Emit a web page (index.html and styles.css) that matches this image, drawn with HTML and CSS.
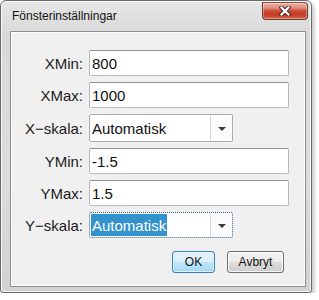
FILE: index.html
```html
<!DOCTYPE html>
<html lang="sv">
<head>
<meta charset="utf-8">
<title>Fönsterinställningar</title>
<link rel="stylesheet" href="styles.css">
</head>
<body>
<div class="window">
  <div class="titlebar">
    <span class="title">Fönsterinställningar</span>
    <div class="close">
      <svg width="12" height="10" viewBox="0 0 12 10">
        <path d="M2.5 1.5 L9.5 8.5 M9.5 1.5 L2.5 8.5" stroke="#4b2620" stroke-width="4.2" stroke-linecap="square" fill="none"/>
        <path d="M2.5 1.5 L9.5 8.5 M9.5 1.5 L2.5 8.5" stroke="#ffffff" stroke-width="2.2" stroke-linecap="square" fill="none"/>
      </svg>
    </div>
  </div>
  <div class="client">
    <div class="form">
      <label class="lbl">XMin:</label>
      <input class="field" type="text" value="800">
      <label class="lbl">XMax:</label>
      <input class="field" type="text" value="1000">
      <label class="lbl tall">X−skala:</label>
      <div class="combo tall">
        <div class="combo-text"><span>Automatisk</span></div>
        <div class="combo-btn"><span class="arrow"></span></div>
      </div>
      <label class="lbl">YMin:</label>
      <input class="field" type="text" value="-1.5">
      <label class="lbl">YMax:</label>
      <input class="field" type="text" value="1.5">
      <label class="lbl">Y−skala:</label>
      <div class="combo focused">
        <div class="combo-text"><span class="sel">Automatisk</span></div>
        <div class="combo-btn"><span class="arrow"></span></div>
      </div>
    </div>
    <div class="buttons">
      <button class="btn default">OK</button>
      <button class="btn">Avbryt</button>
    </div>
  </div>
</div>
</body>
</html>
```
FILE: styles.css
```css
html, body {
  margin: 0;
  padding: 0;
  background: #ffffff;
}

body {
  font-family: "Liberation Sans", Arial, sans-serif;
}

.window {
  width: 312px;
  height: 293px;
  box-sizing: border-box;
  border: 1px solid #6a6a6a;
  border-radius: 6px 6px 3px 3px;
  background: linear-gradient(180deg, #e6e6e6 0%, #d9d9d9 12%, #dcdcdc 60%, #d2d2d2 100%);
  box-shadow: inset 0 0 0 1px rgba(255,255,255,0.75), 2px 3px 4px rgba(0,0,0,0.25);
  padding: 0 5px 5px 9px;
  display: flex;
  flex-direction: column;
}

.titlebar {
  height: 30px;
  display: flex;
  align-items: flex-start;
  flex-shrink: 0;
}

.title {
  font-size: 12px;
  line-height: 16px;
  padding-top: 7px;
  margin-left: 2px;
  color: #111;
}

.close {
  margin-left: auto;
  margin-right: -2px;
  margin-top: 1px;
  width: 46px;
  height: 18px;
  box-sizing: border-box;
  border: 1px solid #6b3a31;
  border-top-color: #8a4a3e;
  border-radius: 0 4px 4px 4px;
  background: linear-gradient(180deg, #eeb3a6 0%, #de8f7d 30%, #cc4a35 50%, #c23a25 75%, #d26a4f 100%);
  box-shadow: inset 0 0 0 1px rgba(255,255,255,0.35);
  display: flex;
  align-items: center;
  justify-content: center;
}

.client {
  flex: 1;
  background: #f0f0f0;
  border: 1px solid #8e8e8e;
  box-shadow: inset 1px 1px 0 #ffffff, inset -1px -1px 0 #ffffff;
  box-sizing: border-box;
  display: flex;
  flex-direction: column;
  margin-top: 0;
}

.form {
  display: grid;
  grid-template-columns: 72px 200px;
  grid-template-rows: 26px 26px 28px 26px 26px 26px;
  column-gap: 6px;
  row-gap: 6px;
  padding-top: 18px;
  align-items: center;
}

.lbl {
  font-size: 15px;
  color: #1a1a1a;
  text-align: right;
  white-space: nowrap;
}

.field {
  -webkit-appearance: none;
  appearance: none;
  margin: 0;
  height: 26px;
  width: 200px;
  box-sizing: border-box;
  border: 1px solid #b5b8bd;
  border-top-color: #8e9196;
  border-radius: 2px;
  background: #ffffff;
  font-family: "Liberation Sans", Arial, sans-serif;
  font-size: 15px;
  color: #111;
  padding: 0 0 0 2px;
  outline: none;
}

.combo {
  width: 144px;
  height: 26px;
  box-sizing: border-box;
  border: 1px solid #acacac;
  border-radius: 2px;
  background: #ffffff;
  display: flex;
  align-items: stretch;
}

.combo.tall {
  height: 28px;
}

.combo-text {
  flex: 1;
  display: flex;
  align-items: center;
  padding: 1px 0 1px 1px;
  font-size: 15px;
  color: #111;
}

.combo-text span {
  padding: 0 1px;
}

.combo-text .sel {
  align-self: stretch;
  display: flex;
  align-items: center;
  background: #3192cc;
  color: #ffffff;
}

.combo-btn {
  width: 21px;
  border-left: 1px solid #dadada;
  display: flex;
  align-items: center;
  justify-content: center;
  background: #fbfbfb;
}

.arrow {
  width: 0;
  height: 0;
  border-left: 4px solid transparent;
  border-right: 4px solid transparent;
  border-top: 4px solid #3a3a3a;
  margin-top: 1px;
}

.combo.focused {
  border: 1px dotted #2d5d8a;
}

.buttons {
  display: flex;
  justify-content: flex-end;
  gap: 12px;
  padding-right: 21px;
  margin-top: 13px;
}

.btn {
  height: 22px;
  width: 57px;
  box-sizing: border-box;
  border: 1px solid #707070;
  border-radius: 3px;
  background: linear-gradient(180deg, #f4f4f4 0%, #ebebeb 48%, #dddddd 52%, #cfcfcf 100%);
  box-shadow: inset 0 0 0 1px rgba(255,255,255,0.8);
  font-family: "Liberation Sans", Arial, sans-serif;
  font-size: 12px;
  color: #111;
  padding: 0;
  margin: 0;
}

.btn.default {
  width: 43px;
  border-color: #3c7fb1;
  background: linear-gradient(180deg, #eaf6fd 0%, #d9f0fc 48%, #bee6fd 52%, #a7d9f5 100%);
  box-shadow: inset 0 0 0 1px rgba(255,255,255,0.7), inset 0 0 3px rgba(80,170,230,0.6);
}
```
